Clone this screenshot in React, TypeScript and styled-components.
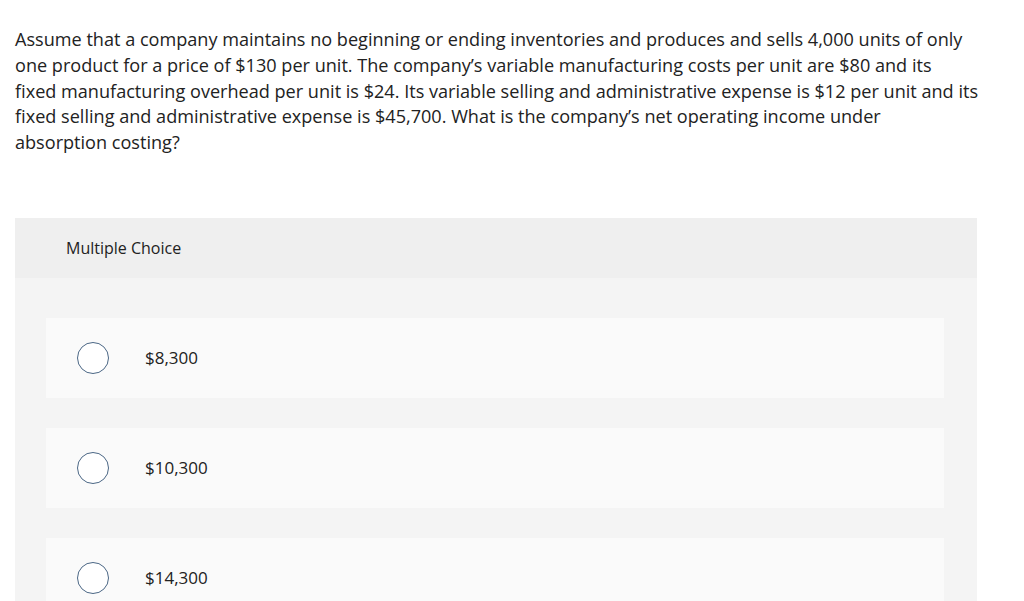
import styled, { createGlobalStyle } from 'styled-components'

const GlobalStyle = createGlobalStyle`
  body {
    margin: 0;
    background: #ffffff;
    font-family: 'Open Sans', 'Liberation Sans', sans-serif;
    color: #222222;
  }
`

const Page = styled.main`
  padding: 27px 0 0 15px;
`

const Prompt = styled.p`
  margin: 0;
  width: 975px;
  font-size: 18.1px;
  line-height: 25.75px;
  color: #222222;
  white-space: nowrap;
`

const Card = styled.section`
  width: 962px;
  margin-top: 62px;
  background: #f4f4f4;
`

const CardHeader = styled.header`
  height: 60px;
  display: flex;
  align-items: center;
  padding-left: 51px;
  background: #efefef;
  font-size: 16px;
  color: #222222;
`

const Options = styled.div`
  display: flex;
  flex-direction: column;
  gap: 30px;
  padding: 40px 33px 0 31px;
`

const Option = styled.label`
  height: 80px;
  display: flex;
  align-items: center;
  gap: 36px;
  padding-left: 31px;
  background: #fafafa;
  font-size: 17px;
  cursor: pointer;
`

const Radio = styled.span`
  width: 30px;
  height: 30px;
  border-radius: 50%;
  border: 1.5px solid #4b6785;
  background: #ffffff;
  flex-shrink: 0;
`

const promptLines = [
  'Assume that a company maintains no beginning or ending inventories and produces and sells 4,000 units of only',
  'one product for a price of $130 per unit. The company’s variable manufacturing costs per unit are $80 and its',
  'fixed manufacturing overhead per unit is $24. Its variable selling and administrative expense is $12 per unit and its',
  'fixed selling and administrative expense is $45,700. What is the company’s net operating income under',
  'absorption costing?',
]

const choices = ['$8,300', '$10,300', '$14,300']

export default function App() {
  return (
    <>
      <GlobalStyle />
      <Page>
        <Prompt>
          {promptLines.map((line, i) => (
            <span key={i}>
              {line}
              {i < promptLines.length - 1 && <br />}
            </span>
          ))}
        </Prompt>
        <Card>
          <CardHeader>Multiple Choice</CardHeader>
          <Options>
            {choices.map((choice) => (
              <Option key={choice}>
                <Radio />
                {choice}
              </Option>
            ))}
          </Options>
        </Card>
      </Page>
    </>
  )
}
